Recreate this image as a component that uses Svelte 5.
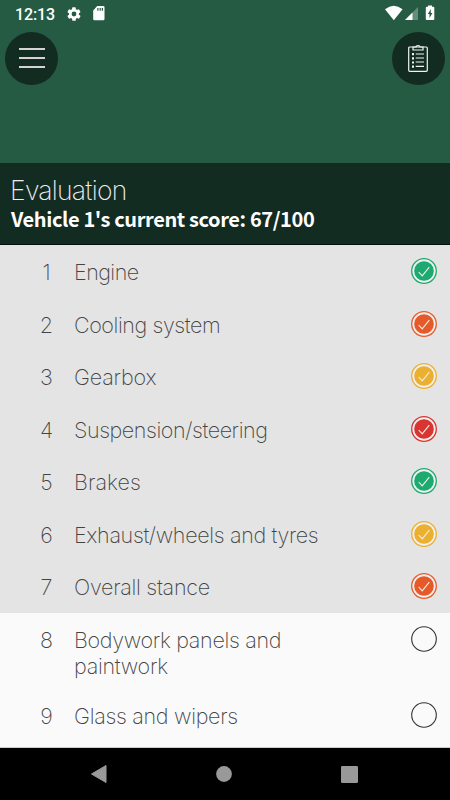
<script>
  const green = '#1caa71', orange = '#e65a2a', yellow = '#ebb02f', red = '#d9342f';
  const items = [
    { lines: ['Engine'], color: green, ls: [-0.55] },
    { lines: ['Cooling system'], color: orange, ls: [-0.42] },
    { lines: ['Gearbox'], color: yellow, ls: [-0.15] },
    { lines: ['Suspension/steering'], color: red, ls: [-0.42] },
    { lines: ['Brakes'], color: green, ls: [0.1] },
    { lines: ['Exhaust/wheels and tyres'], color: yellow, ls: [-0.33] },
    { lines: ['Overall stance'], color: orange, ls: [-0.28] },
    { lines: ['Bodywork panels and', 'paintwork'], color: null, ls: [-0.32, -0.28] },
    { lines: ['Glass and wipers'], color: null, ls: [-0.3] }
  ];
</script>

<div class="screen">
  <header>
    <div class="status">
      <span class="time">12:13</span>
      <svg class="gear" width="16" height="16" viewBox="0 0 24 24"><path fill="#fff" fill-rule="evenodd" d="M19.4 13a7.8 7.8 0 0 0 0-2l2.1-1.7c.2-.1.2-.4.1-.6l-2-3.5c-.1-.2-.4-.3-.6-.2l-2.500 1a7.300 7.300 0 0 0-1.700-1l-.4-2.600a.5.5 0 0 0-.5-.4h-4a.5.5 0 0 0-.5.4l-.4 2.600a7.700 7.700 0 0 0-1.700 1L4.900 5c-.2-.1-.5 0-.6.200l-2 3.500c-.1.2-.1.500.1.600L4.500 11a7.900 7.900 0 0 0 0 2l-2.100 1.700c-.2.100-.2.400-.1.600l2 3.500c.1.200.4.300.6.200l2.500-1c.5.400 1.100.7 1.700 1l.4 2.600c0 .2.200.4.500.4h4c.2 0 .5-.2.5-.4l.4-2.600a7.300 7.300 0 0 0 1.700-1l2.500 1c.2.100.5 0 .6-.2l2-3.500c.1-.2.1-.5-.1-.6zM12 15.600a3.600 3.600 0 1 1 0-7.200 3.600 3.600 0 0 1 0 7.200z"/></svg>
      <svg class="sd" width="12" height="15" viewBox="0 0 12 15"><path fill="#fff" fill-rule="evenodd" d="M4.200 0H10.200Q11.500 0 11.500 1.300V13Q11.500 14.300 10.200 14.300H1.500Q.2 14.300.2 13V4.500zM4.300 2V4.700H5.500V2zM6.600 2V4.700H7.800V2zM8.800 2V4.700H10V2z"/></svg>
      <span class="grow"></span>
      <svg width="51" height="17" viewBox="0 0 51 17">
        <path fill="#fff" d="M0 4.300Q8.700-2.700 17.600 4.300L8.800 15.200z"/>
        <path fill="#fff" opacity=".3" d="M33 2V15H20z"/>
        <path fill="#fff" d="M27.500 7.500V15H20z"/>
        <path fill="#fff" fill-rule="evenodd" d="M43 1.700V.6H47V1.700H48.300Q49.300 1.700 49.300 2.700V14Q49.300 15 48.300 15H41.800Q40.800 15 40.800 14V2.700Q40.800 1.700 41.800 1.700zM46 4L42.800 9H44.500V13L47.500 8H45.700z"/>
      </svg>
    </div>
    <div class="tools">
      <button aria-label="Menu"><svg width="26" height="22" viewBox="0 0 26 22"><path d="M0 2H26M0 11H26M0 20H26" stroke="#d6d1d6" stroke-width="1.900"/></svg></button>
      <button aria-label="Checklist"><svg width="20" height="27" viewBox="0 0 20 27" fill="none" stroke="#f0f4f1" stroke-width="1.200"><rect x=".7" y="2" width="18.600" height="24.300" rx="1"/><path d="M5 2V5H15V2H12Q12 .7 10 .7Q8 .7 8 2z"/><path d="M7.700 9H16M7.700 13H16M7.700 17H16M7.700 21.300H16"/><path stroke-width="2" stroke-dasharray="2.200 2" d="M5 8V23"/></svg></button>
    </div>
  </header>

  <section class="title">
    <h1>Evaluation</h1>
    <p>Vehicle 1's current score: 67/100</p>
  </section>

  <ul>
    {#each items as item, i}
      <li class:done={item.color} class:tall={item.lines.length > 1}>
        <span class="num">{i + 1}</span>
        <span class="label">
          {#each item.lines as line, j}<span class="line" style="letter-spacing:{item.ls[j]}px">{line}</span>{/each}
        </span>
        <svg class="mark" width="28" height="28" viewBox="0 0 28 28" fill="none">
          {#if item.color}
            <circle cx="14" cy="14" r="11.200" stroke="#f1f0ef" stroke-width="2.600"/>
            <circle cx="14" cy="14" r="12.300" stroke={item.color} stroke-width="1.300"/>
            <circle cx="14" cy="14" r="9.800" fill={item.color}/>
            <path d="M8.700 15L12.200 18.800L19.300 10.200" stroke="#f3eee6" stroke-width="1.100"/>
          {:else}
            <circle cx="14" cy="14" r="12.300" stroke="#333" stroke-width="1.100"/>
          {/if}
        </svg>
      </li>
    {/each}
  </ul>

  <nav>
    <svg width="18" height="20" viewBox="0 0 18 20"><path d="M1.500 10L16 1.500V18.500z" fill="#999" stroke="#999" stroke-linejoin="round"/></svg>
    <svg width="16" height="16" viewBox="0 0 16 16"><circle cx="8" cy="8" r="7.900" fill="#999"/></svg>
    <svg width="17" height="17" viewBox="0 0 17 17"><rect width="17" height="17" rx="1.200" fill="#999"/></svg>
  </nav>
</div>

<style>
  :global(body) { margin: 0; }
  .screen { width: 450px; height: 800px; display: flex; flex-direction: column; overflow: hidden; background: #fafafa; font-family: Inter, "Liberation Sans", sans-serif; }
  header { height: 163px; background: #255b43; flex: none; }
  .status { height: 27px; display: flex; align-items: center; padding: 0 14px 0 15px; box-sizing: border-box; }
  .time { font: 500 16px/27px Roboto, sans-serif; color: #fff; width: 51px; letter-spacing: -0.1px; padding-top: 1px; }
  .gear { flex: none; }
  .sd { margin-left: 11px; }
  .grow { flex: 1; }
  .tools { display: flex; justify-content: space-between; padding: 4.500px 5.500px 0 5px; }
  button { width: 53px; height: 53px; border: 0; border-radius: 50%; background: #132c22; padding: 0; display: flex; align-items: center; justify-content: center; }
  .title { height: 82px; box-sizing: border-box; background: #132c22; border-bottom: 1px solid #04100b; padding: 11px 11px 0; flex: none; white-space: nowrap; }
  h1 { margin: 0 0 0 -1px; font-size: 26.500px; font-weight: 200; line-height: 32px; color: #f0ebee; letter-spacing: -0.75px; }
  p { margin: -1px 0 0; font: 700 20px/28px "Noto Sans CJK SC", sans-serif; color: #fff; letter-spacing: -0.38px; }
  ul { list-style: none; margin: 0; padding: 0; flex: none; height: 503px; box-sizing: border-box; border-bottom: 1px solid #ccc; overflow: hidden; }
  li { height: 52.500px; display: flex; align-items: flex-start; box-sizing: border-box; padding: 14px 12.500px 0 0; color: #444; font-size: 21.500px; font-weight: 200; line-height: 26px; }
  .done { background: #e4e4e4; }
  .tall { height: 76.700px; }
  .num { width: 24px; margin-left: 34.500px; text-align: center; }
  .label { margin-left: 15.500px; flex: 1; white-space: nowrap; }
  .line { display: block; width: max-content; }
  .mark { margin-top: -2px; flex: none; }
  nav { height: 52px; background: #000; display: flex; align-items: center; justify-content: space-between; padding: 0 92.500px 0 90px; box-sizing: border-box; flex: none; }
</style>
